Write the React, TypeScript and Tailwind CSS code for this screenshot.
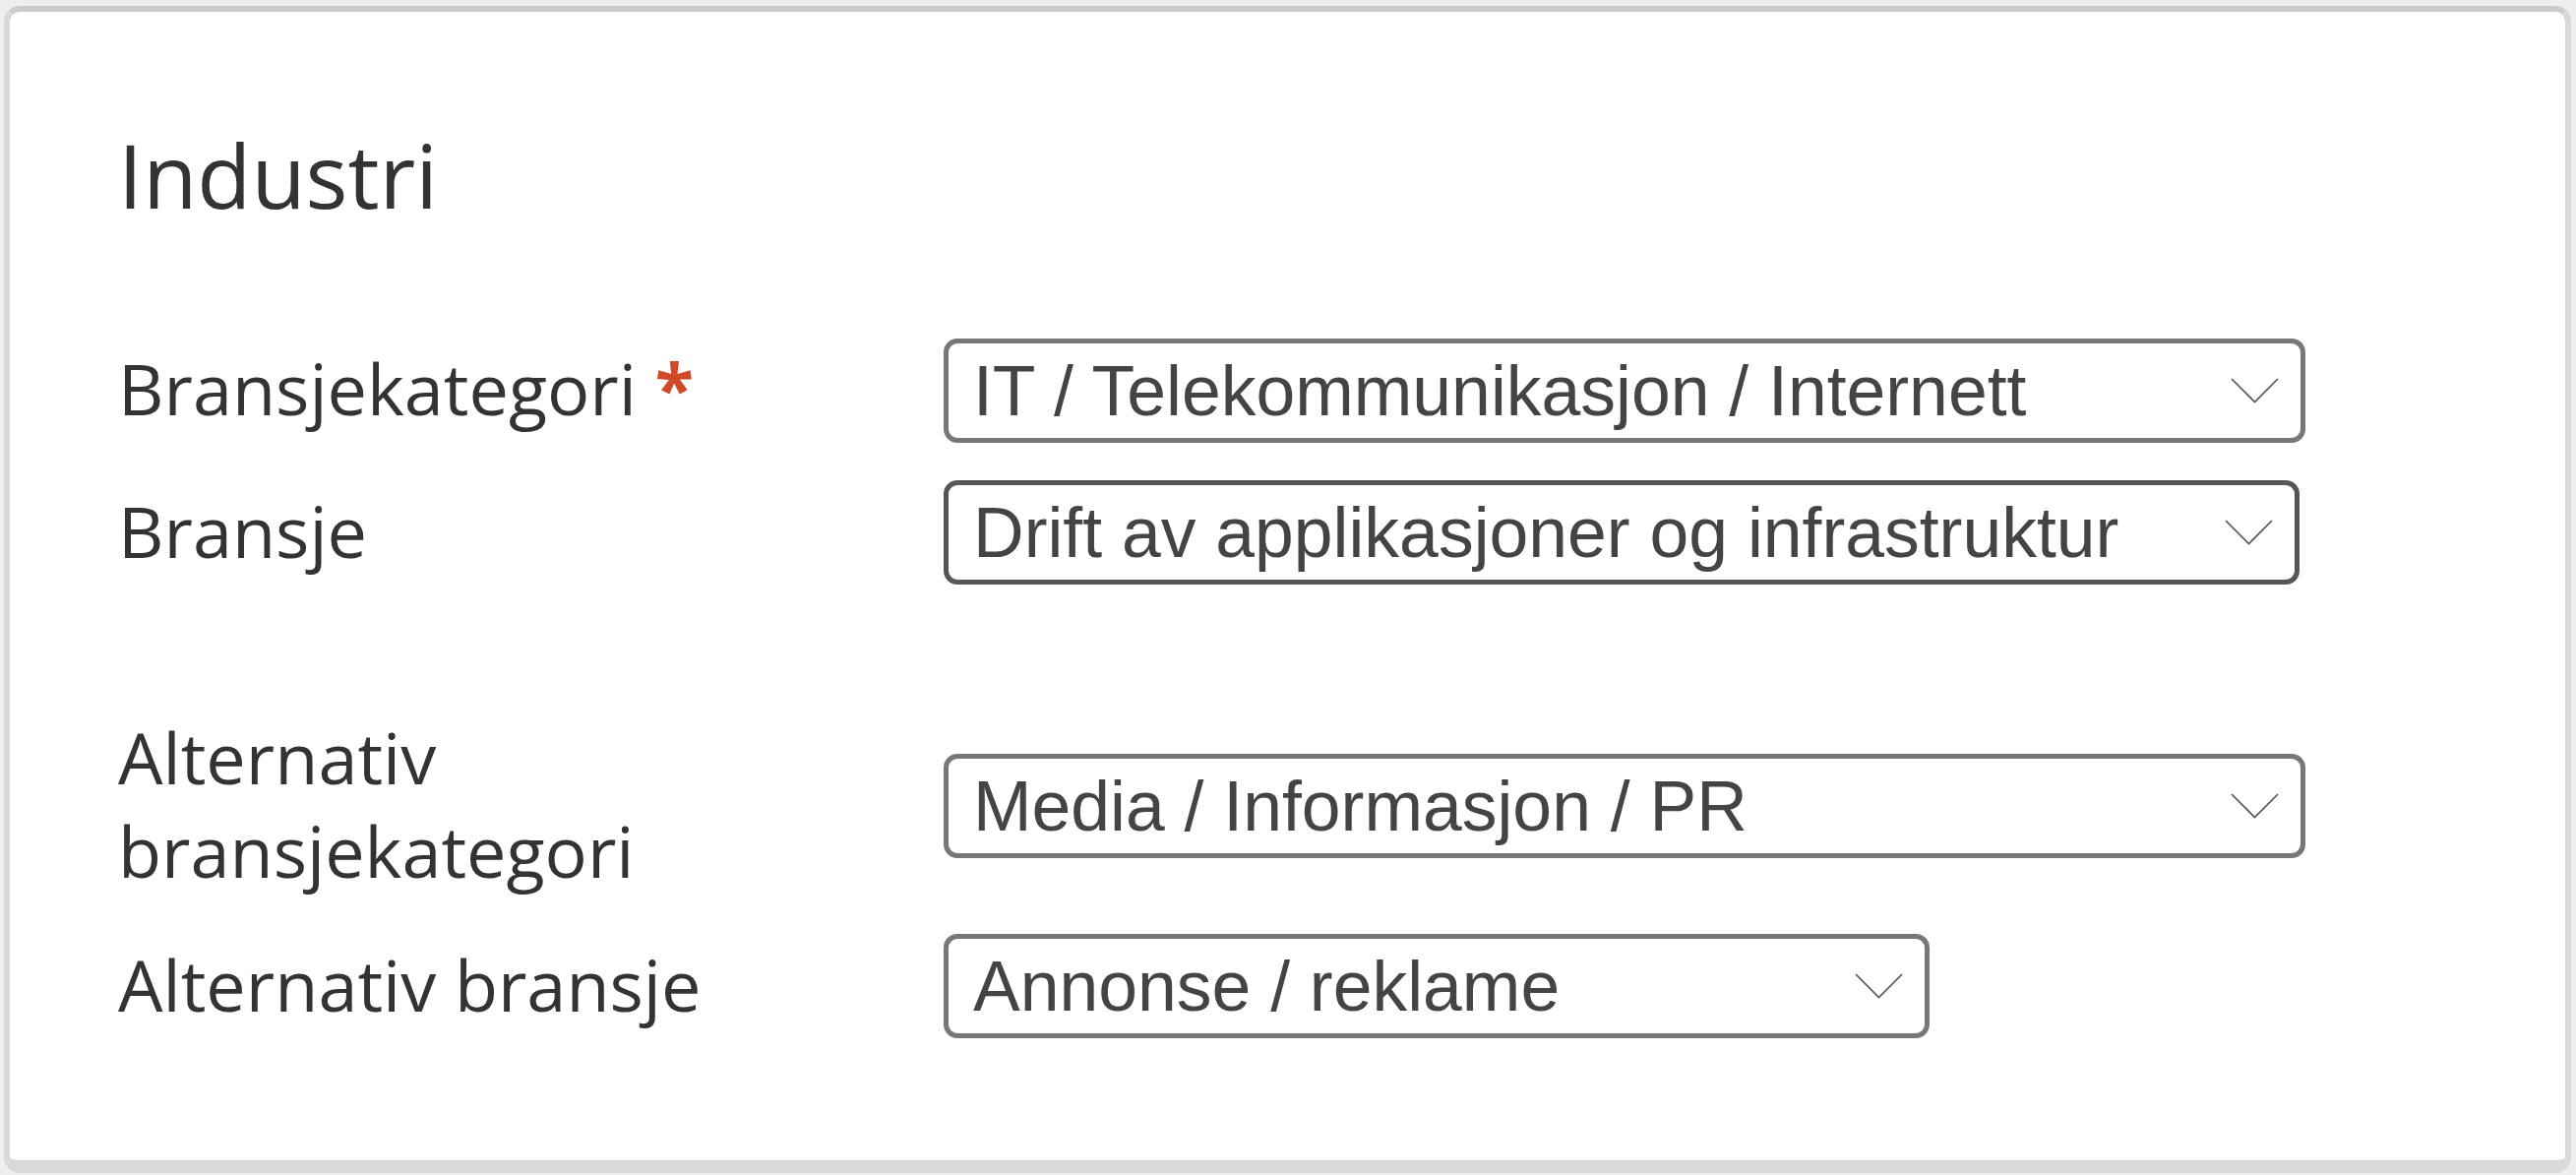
import React from "react";

function Chevron() {
  return (
    <svg width="49" height="26" viewBox="0 0 49 26" className="shrink-0">
      <polyline points="1,1 24.5,24.5 48,1" fill="none" stroke="#555555" strokeWidth="1.7" />
    </svg>
  );
}

function FakeSelect({ value, width, focused }: { value: string; width: string; focused?: boolean }) {
  return (
    <div
      className={
        "flex h-[106px] items-center justify-between rounded-[14px] border-[5px] bg-white pl-[25px] pr-[22px] " +
        width +
        " " +
        (focused ? "border-[#555555]" : "border-[#777777]")
      }
    >
      <span className="whitespace-nowrap text-[71.5px] leading-[80px] text-[#444444] [font-family:'Liberation_Sans',Arial,sans-serif]">
        {value}
      </span>
      <Chevron />
    </div>
  );
}

export default function App() {
  return (
    <div className="min-h-screen bg-[#eeeeee] pb-[2px] pl-[4px] pr-[5px] pt-[6px]">
      <div className="h-[1186px] rounded-[16px] border-x-[6px] border-b-[13px] border-t-[6px] border-x-[#d8d8d8] border-b-[#d9d9d9] border-t-[#cccccc] bg-white pl-[110px] pt-[109px] text-[#333333] [font-family:'Open_Sans',sans-serif]">
        <h1 className="text-[90px] font-normal leading-[113px]">Industri</h1>

        <div className="mt-[110px] flex items-start">
          <div className="w-[839px] pt-[3px] text-[72px] leading-[95px]">
            Bransjekategori <span className="font-bold text-[#d04a27]">*</span>
          </div>
          <FakeSelect value="IT / Telekommunikasjon / Internett" width="w-[1384px]" />
        </div>

        <div className="mt-[38px] flex items-start">
          <div className="w-[839px] pt-[4px] text-[72px] leading-[95px]">Bransje</div>
          <FakeSelect value="Drift av applikasjoner og infrastruktur" width="w-[1378px]" focused />
        </div>

        <div className="mt-[127px] flex items-start">
          <div className="w-[839px] pt-[1px] text-[72px] leading-[95px]">
            Alternativ
            <br />
            bransjekategori
          </div>
          <div className="pt-[45px]">
            <FakeSelect value="Media / Informasjon / PR" width="w-[1384px]" />
          </div>
        </div>

        <div className="mt-[37px] flex items-start">
          <div className="w-[839px] pt-[4px] text-[72px] leading-[95px]">Alternativ bransje</div>
          <FakeSelect value="Annonse / reklame" width="w-[1002px]" />
        </div>
      </div>
    </div>
  );
}
